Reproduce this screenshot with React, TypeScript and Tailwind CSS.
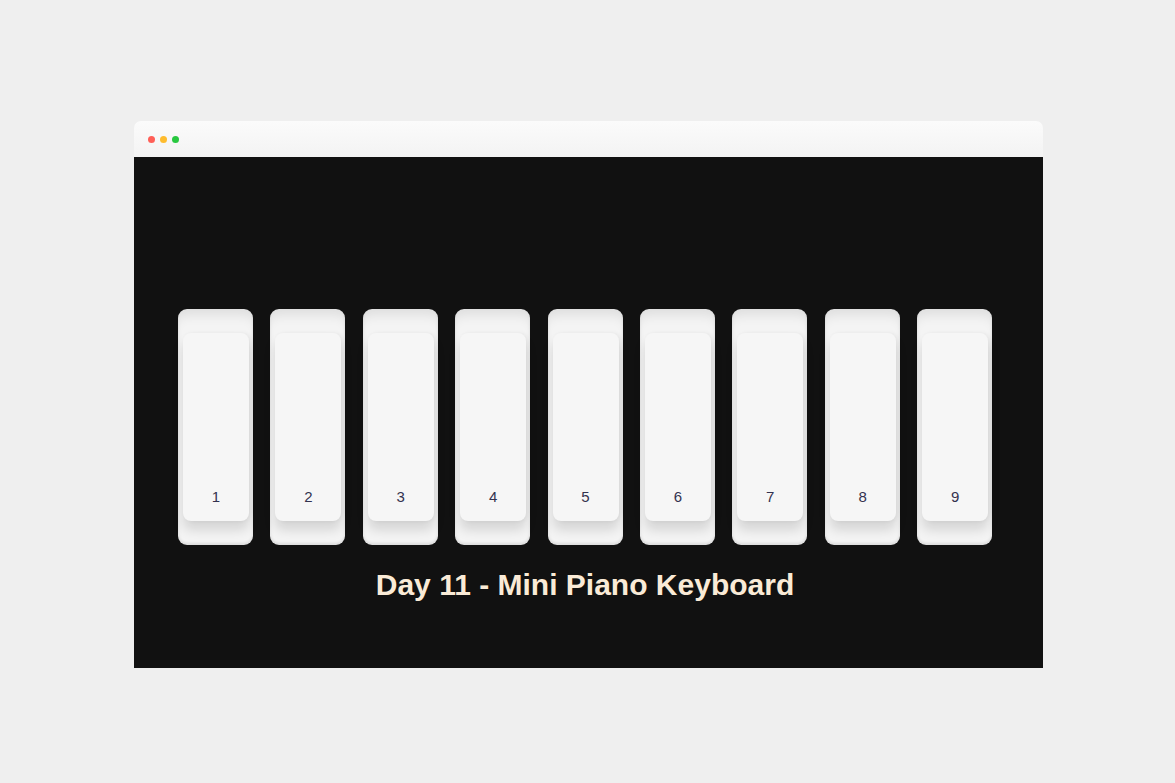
const keys = [1, 2, 3, 4, 5, 6, 7, 8, 9];

function PianoKey({ label }: { label: number }) {
  return (
    <div className="flex h-[236px] w-[75px] flex-col rounded-[9px] bg-[#f4f4f4] pl-[5px] pr-[4px] pt-[24px] pb-[24px] shadow-[inset_0_12px_12px_-6px_rgba(0,0,0,0.09),inset_0_-2px_3px_rgba(0,0,0,0.10)]">
      <div className="flex flex-1 flex-col items-center justify-end rounded-[8px] bg-[#f6f6f6] pb-[17px] shadow-[0_9px_12px_rgba(0,0,0,0.13),2px_0_4px_rgba(0,0,0,0.05)]">
        <span className="text-[15px] leading-none text-[#33324f] [font-family:'Liberation_Sans',Arial,sans-serif]">
          {label}
        </span>
      </div>
    </div>
  );
}

export default function App() {
  return (
    <div className="min-h-[783px] w-full bg-[#efefef] pt-[121px]">
      <div className="ml-[134px] w-[909px]">
        <div className="flex h-[36px] items-center gap-[5px] rounded-t-[7px] bg-gradient-to-b from-[#fbfbfb] to-[#f3f3f3] pl-[14px]">
          <span className="h-[7px] w-[7px] rounded-full bg-[#ff5f57]" />
          <span className="h-[7px] w-[7px] rounded-full bg-[#febc2e]" />
          <span className="h-[7px] w-[7px] rounded-full bg-[#28c840]" />
        </div>
        <div className="flex h-[511px] flex-col items-center bg-[#111111] pt-[152px]">
          <div className="ml-[-7px] flex gap-[17.4px]">
            {keys.map((k) => (
              <PianoKey key={k} label={k} />
            ))}
          </div>
          <h1 className="ml-[-7px] mt-[22px] text-[30px] font-bold leading-[36px] text-[#faebd7] [font-family:'Liberation_Sans',Arial,sans-serif]">
            Day 11 - Mini Piano Keyboard
          </h1>
        </div>
      </div>
    </div>
  );
}
